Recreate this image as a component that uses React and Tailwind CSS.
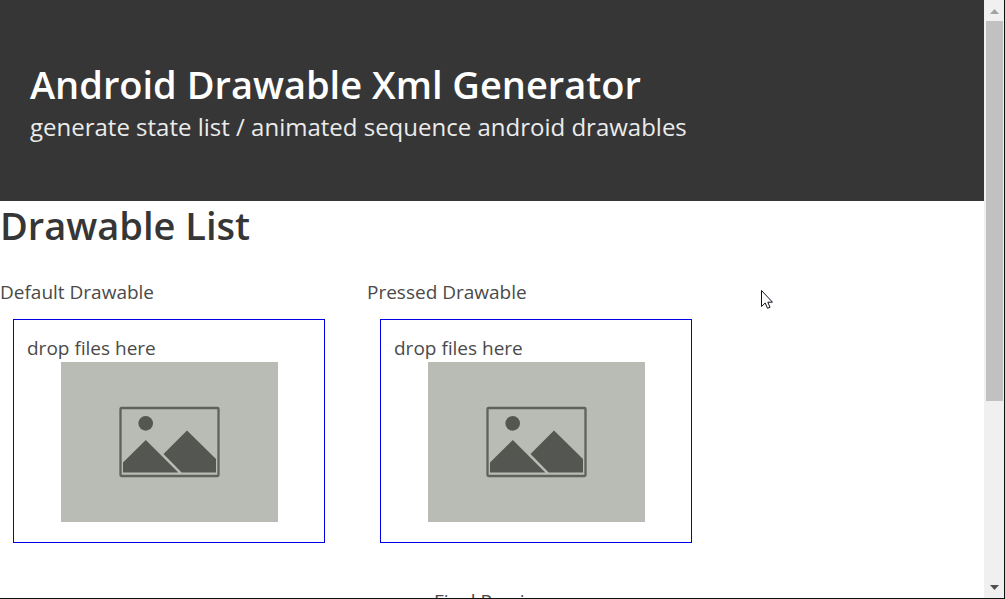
import React from 'react'

function PlaceholderImage() {
  return (
    <svg className="mx-auto block h-40 w-[217px] bg-[#b9bcb4]" viewBox="0 0 217 160" role="img" aria-label="No image selected">
      <rect x="59.5" y="46" width="98" height="68" rx="1" fill="none" stroke="#5f625c" strokeWidth="2.3" />
      <circle cx="84.7" cy="61.4" r="7.3" fill="#545651" />
      <path d="M62 100.5 84.8 78 117.3 110.5H62Z" fill="#545651" />
      <path d="M126 68.5 155 97V110.5H120.7L102.5 92Z" fill="#545651" />
    </svg>
  )
}

function DrawableSlot({ title, name }) {
  return (
    <section className="w-[338px]">
      <h2 className="text-[19px] leading-[30px]">{title}</h2>
      <label
        htmlFor={name}
        className="relative mx-[13px] mt-3 block border border-[#0000e6] px-[13px] pt-[14px] pb-5"
      >
        <span className="block text-[19px] leading-7">drop files here</span>
        <PlaceholderImage />
        <input id={name} type="file" className="sr-only" />
      </label>
    </section>
  )
}

function ScrollBar() {
  return (
    <div className="flex w-5 shrink-0 flex-col items-center bg-[#f0f0f0]" aria-hidden="true">
      <svg className="h-[21px] w-[17px] shrink-0" viewBox="0 0 17 21">
        <path d="M4 14 8.5 9 13 14Z" fill="#a0a3a0" />
      </svg>
      <div className="w-[17px] grow-[380] bg-[#c1c1c1]" />
      <div className="grow-[176]" />
      <svg className="h-[21px] w-[17px] shrink-0" viewBox="0 0 17 21">
        <path d="M4 8H13L8.5 13Z" fill="#505050" />
      </svg>
    </div>
  )
}

function Pointer() {
  return (
    <svg className="pointer-events-none absolute top-[290px] left-[761px] h-5 w-3" viewBox="0 0 12 20" aria-hidden="true">
      <path
        d="M.5 .5V16.5L4.2 13 6.5 18.3 9 17.3 6.8 12.2H11.5Z"
        fill="#fff"
        stroke="#10101c"
        strokeWidth="1"
      />
    </svg>
  )
}

export default function App() {
  return (
    <div className="relative flex h-screen overflow-hidden border-r border-b border-[#111] bg-white font-['Open_Sans','Noto_Sans',sans-serif] text-[#4a4a4a]">
      <div className="min-w-0 flex-1 overflow-hidden">
        <header className="bg-[#363636] px-[30px] pt-[60px] pb-14">
          <h1 className="text-[38px] leading-[49px] font-semibold text-white">Android Drawable Xml Generator</h1>
          <p className="text-2xl leading-9 text-[#ebebeb]">generate state list / animated sequence android drawables</p>
        </header>
        <main>
          <h1 className="text-[38px] leading-[49px] font-semibold text-[#363636]">Drawable List</h1>
          <div className="mt-[27px] flex gap-[29px]">
            <DrawableSlot title="Default Drawable" name="default-drawable" />
            <DrawableSlot title="Pressed Drawable" name="pressed-drawable" />
          </div>
          <h2 className="mt-[43px] text-center text-[19px] leading-[30px]">Final Preview</h2>
        </main>
      </div>
      <ScrollBar />
      <Pointer />
    </div>
  )
}
